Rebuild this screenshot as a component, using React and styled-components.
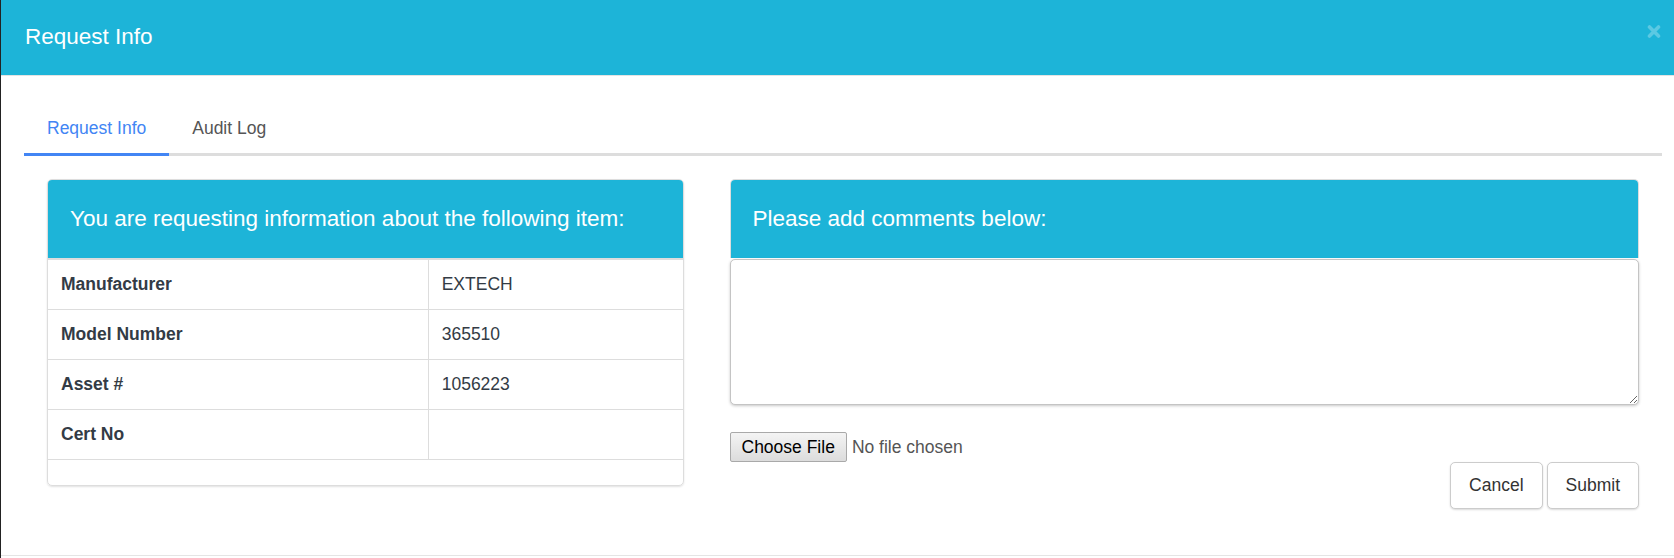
import styled, { createGlobalStyle } from "styled-components";

const teal = "#1db4d8";

const GlobalStyle = createGlobalStyle`
  html, body {
    margin: 0;
    padding: 0;
    background: #222;
  }
  body {
    font-family: "Liberation Sans", Arial, sans-serif;
  }
  * {
    box-sizing: border-box;
  }
`;

const Modal = styled.div`
  margin-left: 1px;
  height: 558px;
  background: #fff;
`;

const Header = styled.header`
  height: 76px;
  background: ${teal};
  border-bottom: 1px solid #e3e3e3;
  display: flex;
  align-items: center;
  justify-content: space-between;
  padding: 0 13px 1px 24px;
`;

const Title = styled.h4`
  margin: 0;
  font-size: 22.5px;
  font-weight: normal;
  line-height: 1;
  color: #fff;
`;

const Close = styled.button`
  align-self: flex-start;
  margin-top: 24px;
  padding: 0;
  border: none;
  background: none;
  line-height: 0;
  cursor: pointer;
`;

const Body = styled.div`
  height: 480px;
  padding: 27px 12px 0 23px;
  border-bottom: 1px solid #e5e5e5;
`;

const Tabs = styled.nav`
  display: flex;
  border-bottom: 3px solid #ddd;
`;

const Tab = styled.a`
  display: flex;
  align-items: center;
  height: 53px;
  padding: 0 23px;
  margin-bottom: -3px;
  font-size: 17.5px;
  color: ${(p) => (p.$active ? "#4285f4" : "#555")};
  border-bottom: 3px solid ${(p) => (p.$active ? "#4285f4" : "transparent")};
  cursor: pointer;
`;

const Content = styled.div`
  display: grid;
  grid-template-columns: 5fr 7fr;
  margin-top: 23px;
`;

const Column = styled.div`
  padding: 0 23px;
`;

const Panel = styled.section`
  border: 1px solid #ddd;
  border-radius: 5px;
  box-shadow: 0 1px 2px rgba(0, 0, 0, 0.12);
  overflow: hidden;
`;

const HeadPanel = styled.div`
  border: 1px solid #ddd;
  border-bottom: none;
  border-radius: 5px 5px 0 0;
  overflow: hidden;
`;

const PanelHeading = styled.h3`
  margin: 0;
  height: 78px;
  display: flex;
  align-items: center;
  padding: 0 22px;
  background: ${teal};
  color: #fff;
  font-size: 22.5px;
  font-weight: normal;
  line-height: 1.1;
`;

const Table = styled.div`
  border-top: 2px solid #ddd;
  margin-bottom: 25px;
`;

const Row = styled.div`
  display: grid;
  grid-template-columns: 60% 40%;
  border-bottom: 1px solid #ddd;
`;

const Cell = styled.div`
  height: 49px;
  display: flex;
  align-items: center;
  padding: 0 13px;
  font-size: 17.5px;
  color: #333b45;
  font-weight: ${(p) => (p.$label ? "bold" : "normal")};
  border-right: ${(p) => (p.$label ? "1px solid #ddd" : "none")};
`;

const Comments = styled.textarea`
  display: block;
  width: 100%;
  height: 146px;
  margin-top: 1px;
  border: 1px solid #c4c4c4;
  border-radius: 5px;
  box-shadow: 0 1px 3px rgba(0, 0, 0, 0.22);
  font-family: inherit;
  font-size: 17.5px;
  padding: 8px 12px;
  resize: vertical;
`;

const FileRow = styled.label`
  display: flex;
  align-items: center;
  gap: 5px;
  margin-top: 27px;
  font-size: 17.5px;
`;

const FileButton = styled.span`
  display: inline-flex;
  align-items: center;
  height: 30px;
  padding: 0 11px;
  border: 1px solid #a9a9a9;
  border-radius: 2px;
  background: linear-gradient(#f4f4f4, #dcdcdc);
  color: #000;
`;

const FileName = styled.span`
  color: #555;
`;

const HiddenInput = styled.input`
  display: none;
`;

const Actions = styled.div`
  display: flex;
  justify-content: flex-end;
  gap: 4px;
`;

const Button = styled.button`
  height: 47px;
  padding: 0 18px;
  border: 1px solid #ccc;
  border-radius: 5px;
  background: #fff;
  box-shadow: 0 1px 2px rgba(0, 0, 0, 0.15);
  font-family: inherit;
  font-size: 17.5px;
  color: #333;
  cursor: pointer;
`;

const rows = [
  { label: "Manufacturer", value: "EXTECH" },
  { label: "Model Number", value: "365510" },
  { label: "Asset #", value: "1056223" },
  { label: "Cert No", value: "" },
];

export default function App() {
  return (
    <>
      <GlobalStyle />
      <Modal>
        <Header>
          <Title>Request Info</Title>
          <Close aria-label="Close">
            <svg width="14" height="15" viewBox="0 0 14 15">
              <path
                d="M2.5 3 L11.5 12 M11.5 3 L2.5 12"
                stroke="rgba(255,255,255,0.28)"
                strokeWidth="3.6"
                strokeLinecap="round"
              />
            </svg>
          </Close>
        </Header>
        <Body>
          <Tabs>
            <Tab $active>Request Info</Tab>
            <Tab>Audit Log</Tab>
          </Tabs>
          <Content>
            <Column>
              <Panel>
                <PanelHeading>You are requesting information about the following item:</PanelHeading>
                <Table>
                  {rows.map((r) => (
                    <Row key={r.label}>
                      <Cell $label>{r.label}</Cell>
                      <Cell>{r.value}</Cell>
                    </Row>
                  ))}
                </Table>
              </Panel>
            </Column>
            <Column>
              <HeadPanel>
                <PanelHeading>Please add comments below:</PanelHeading>
              </HeadPanel>
              <Comments />
              <FileRow>
                <HiddenInput type="file" />
                <FileButton>Choose File</FileButton>
                <FileName>No file chosen</FileName>
              </FileRow>
              <Actions>
                <Button>Cancel</Button>
                <Button>Submit</Button>
              </Actions>
            </Column>
          </Content>
        </Body>
      </Modal>
    </>
  );
}
